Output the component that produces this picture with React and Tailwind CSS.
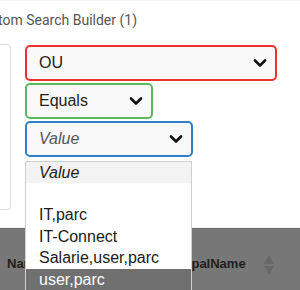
function Chevron() {
  return (
    <svg width="14" height="9" viewBox="0 0 14 9" className="shrink-0">
      <polyline points="2,1.5 7,6.5 12,1.5" fill="none" stroke="#111" strokeWidth="2.6" strokeLinecap="round" strokeLinejoin="round" />
    </svg>
  );
}

function SelectBox({ label, width, border, italic = false }) {
  return (
    <div
      className={`flex h-[36px] items-center justify-between rounded-[5px] border-2 bg-[#f9f9f9] pl-[12px] pr-[8px] ${width} ${border}`}
    >
      <span className={`text-[16px] leading-none ${italic ? 'italic text-[#555]' : 'text-[#222]'}`}>{label}</span>
      <Chevron />
    </div>
  );
}

const options = [
  { label: 'Value', kind: 'placeholder' },
  { label: '', kind: 'empty' },
  { label: 'IT,parc' },
  { label: 'IT-Connect' },
  { label: 'Salarie,user,parc' },
  { label: 'user,parc', kind: 'active' },
];

export default function App() {
  return (
    <div className="relative h-[290px] w-[300px] overflow-hidden bg-white font-['Liberation_Sans',Arial,sans-serif]">
      <div className="flex h-[44px] items-center border-t border-[#f4f4f4] pb-[4px]">
        <p className="-ml-[26px] whitespace-nowrap font-['Roboto',sans-serif] text-[14px] text-[#555]">
          Custom Search Builder (1)
        </p>
      </div>

      <div className="flex items-start">
        <div className="h-[166px] w-[11px] rounded-r-[4px] border border-l-0 border-[#dcdcdc] bg-white" />
        <div className="ml-[14px] flex flex-col gap-[2px] pt-[1px]">
          <SelectBox label="OU" width="w-[252px]" border="border-[#e8322b]" />
          <SelectBox label="Equals" width="w-[128px]" border="border-[#5cb85c]" />
          <SelectBox label="Value" width="w-[168px]" border="border-[#2f7fc8]" italic />
        </div>
      </div>

      <div className="mt-[2px] h-[16px] border-b border-[#f3f3f3]" />

      {/* table header, dimmed behind the open dropdown */}
      <div className="flex h-[62px] items-center border-t border-[#6a6a6a] bg-[#777777] pt-[8px]">
        <span className="ml-[7px] whitespace-nowrap text-[13px] font-bold text-[#1e1e1e]">Name</span>
        <span className="ml-[84px] whitespace-nowrap text-[13px] font-bold text-[#1e1e1e]">UserPrincipalName</span>
        <svg width="12" height="22" viewBox="0 0 12 22" className="ml-[17px] mt-[3px]">
          <polygon points="6,1 11,10 1,10" fill="#686868" />
          <polygon points="6,21 11,12 1,12" fill="#686868" />
        </svg>
      </div>

      <div className="absolute left-[25px] top-[161px] w-[167px] border border-b-0 border-[#cfcfcf] bg-white">
        {options.map((o, i) => (
          <div
            key={i}
            className={`flex h-[21.4px] items-center pl-[13px] text-[16px] leading-none whitespace-nowrap ${
              o.kind === 'placeholder'
                ? 'bg-[#f3f3f3] italic text-[#222]'
                : o.kind === 'active'
                ? 'bg-[#707070] text-white'
                : 'text-[#1a1a1a]'
            }`}
          >
            {o.label}
          </div>
        ))}
      </div>
    </div>
  );
}
